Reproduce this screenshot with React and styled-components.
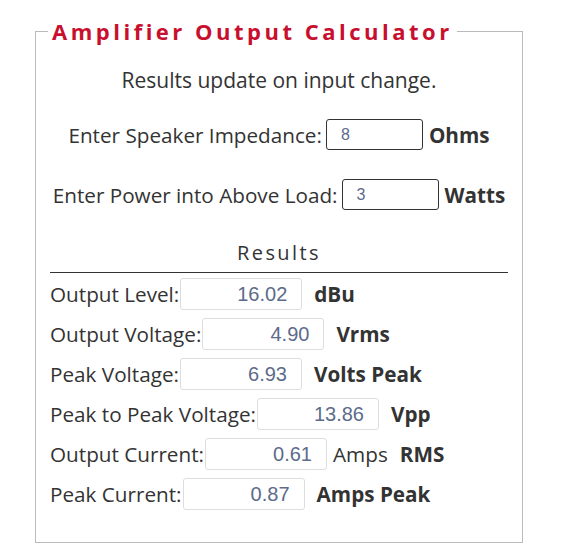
import React from 'react'
import styled, { createGlobalStyle } from 'styled-components'

const GlobalStyle = createGlobalStyle`
    body {
        margin: 0;
        background: #fff;
        font-family: "Open Sans", "Liberation Sans", sans-serif;
        color: #333;
    }
`;

const Page = styled.div`
    padding: 18px 0 0 35px;
`;

const Fieldset = styled.fieldset`
    width: 488px;
    box-sizing: border-box;
    margin: 0;
    padding: 0 14px 24px;
    border: 1px solid #bbb;
    min-width: 0;
`;

const Legend = styled.legend`
    margin-left: -2px;
    padding: 0 4px;
    font-size: 22px;
    line-height: 26px;
    font-weight: 700;
    letter-spacing: 3.5px;
    color: #c8102e;
`;

const Note = styled.p`
    margin: 22px 0 0;
    text-align: center;
    font-size: 21px;
    line-height: 28px;
`;

const InputRow = styled.div`
    display: flex;
    justify-content: center;
    align-items: center;
    height: 31px;
    margin-top: ${props => props.$top}px;
    font-size: 20.7px;
    white-space: nowrap;
`;

const EntryInput = styled.input`
    width: 97px;
    height: 31px;
    box-sizing: border-box;
    flex: none;
    margin: 0 6px 0 4px;
    padding: 0 14px;
    border: 1px solid #333;
    border-radius: 3px;
    font-family: "Liberation Sans", Arial, sans-serif;
    font-size: 16px;
    color: #5c6b8a;
    outline: none;
`;

const Unit = styled.span`
    font-weight: 700;
    margin-left: ${props => props.$gap || 0}px;
`;

const Heading = styled.div`
    margin: 29px 0 5px;
    text-align: center;
    font-size: 20px;
    line-height: 28px;
    letter-spacing: 2.4px;
`;

const Rule = styled.hr`
    margin: 0 0 5px;
    border: 0;
    border-top: 1px solid #333;
`;

const ResultRow = styled.div`
    display: flex;
    align-items: center;
    height: 32px;
    margin-bottom: 8px;
    font-size: 20.7px;
    white-space: nowrap;
`;

const ResultInput = styled.input`
    width: 122px;
    height: 32px;
    box-sizing: border-box;
    flex: none;
    margin: 0 0 0 1px;
    padding: 0 14px;
    border: 1px solid #ddd;
    border-radius: 3px;
    text-align: right;
    font-family: "Liberation Sans", Arial, sans-serif;
    font-size: 20px;
    color: #5c6b8a;
    outline: none;
`;

const Plain = styled.span`
    margin-left: 6px;
`;

const results = [
    { label: 'Output Level:', value: '16.02', unit: 'dBu' },
    { label: 'Output Voltage:', value: '4.90', unit: 'Vrms' },
    { label: 'Peak Voltage:', value: '6.93', unit: 'Volts Peak' },
    { label: 'Peak to Peak Voltage:', value: '13.86', unit: 'Vpp' },
    { label: 'Output Current:', value: '0.61', plain: 'Amps', unit: 'RMS' },
    { label: 'Peak Current:', value: '0.87', unit: 'Amps Peak' },
];

const App = () => {
    return (
        <Page>
            <GlobalStyle />
            <Fieldset>
                <Legend>Amplifier Output Calculator</Legend>
                <Note>Results update on input change.</Note>
                <InputRow $top={25}>
                    Enter Speaker Impedance:
                    <EntryInput defaultValue="8" />
                    <Unit>Ohms</Unit>
                </InputRow>
                <InputRow $top={29}>
                    Enter Power into Above Load:
                    <EntryInput defaultValue="3" />
                    <Unit>Watts</Unit>
                </InputRow>
                <Heading>Results</Heading>
                <Rule />
                {results.map(r => (
                    <ResultRow key={r.label}>
                        {r.label}
                        <ResultInput readOnly value={r.value} />
                        {r.plain && <Plain>{r.plain}</Plain>}
                        <Unit $gap={12}>{r.unit}</Unit>
                    </ResultRow>
                ))}
            </Fieldset>
        </Page>
    )
}

export default App;
